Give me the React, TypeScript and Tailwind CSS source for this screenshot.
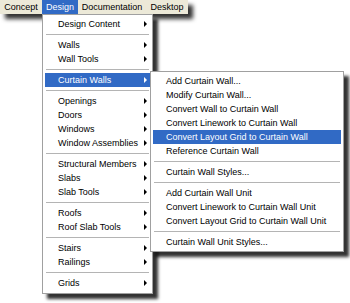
import React from "react";

type Item = { t: string; hl?: boolean } | "sep";

const mainItems: Item[] = [
  { t: "Design Content" },
  "sep",
  { t: "Walls" },
  { t: "Wall Tools" },
  "sep",
  { t: "Curtain Walls", hl: true },
  "sep",
  { t: "Openings" },
  { t: "Doors" },
  { t: "Windows" },
  { t: "Window Assemblies" },
  "sep",
  { t: "Structural Members" },
  { t: "Slabs" },
  { t: "Slab Tools" },
  "sep",
  { t: "Roofs" },
  { t: "Roof Slab Tools" },
  "sep",
  { t: "Stairs" },
  { t: "Railings" },
  "sep",
  { t: "Grids" },
];

const subItems: Item[] = [
  { t: "Add Curtain Wall..." },
  { t: "Modify Curtain Wall..." },
  { t: "Convert Wall to Curtain Wall" },
  { t: "Convert Linework to Curtain Wall" },
  { t: "Convert Layout Grid to Curtain Wall", hl: true },
  { t: "Reference Curtain Wall" },
  "sep",
  { t: "Curtain Wall Styles..." },
  "sep",
  { t: "Add Curtain Wall Unit" },
  { t: "Convert Linework to Curtain Wall Unit" },
  { t: "Convert Layout Grid to Curtain Wall Unit" },
  "sep",
  { t: "Curtain Wall Unit Styles..." },
];

function Arrow({ white }: { white?: boolean }) {
  return (
    <span
      className={
        white
          ? "w-0 h-0 border-y-[3px] border-y-transparent border-l-[3px] border-l-white"
          : "w-0 h-0 border-y-[3px] border-y-transparent border-l-[3px] border-l-black"
      }
    />
  );
}

function Rows({ items, arrows }: { items: Item[]; arrows: boolean }) {
  return (
    <>
      {items.map((it, i) =>
        it === "sep" ? (
          <div key={i} className="h-[7px] flex items-center px-[1px]">
            <div className="h-px w-full bg-[#b4b4b4]" />
          </div>
        ) : (
          <div
            key={i}
            className={
              it.hl
                ? "h-[14px] leading-[14px] flex items-center justify-between pl-[13px] pr-[3px] bg-[#316ac5] text-white whitespace-nowrap"
                : "h-[14px] leading-[14px] flex items-center justify-between pl-[13px] pr-[3px] text-black whitespace-nowrap"
            }
          >
            <span>{it.t}</span>
            {arrows && <Arrow white={it.hl} />}
          </div>
        )
      )}
    </>
  );
}

export default function App() {
  return (
    <div
      className="relative w-[350px] h-[303px] bg-white overflow-hidden text-[9px]"
      style={{ fontFamily: '"Liberation Sans", Arial, sans-serif' }}
    >
      <div className="flex h-[14px] w-[188px] bg-[#ece9d8] shadow-[5px_5px_4px_rgba(0,0,0,0.8)] leading-[14px] text-black">
        <div className="w-[42px] text-center">Concept</div>
        <div className="w-[36px] text-center bg-[#316ac5] text-white">Design</div>
        <div className="w-[68px] text-center">Documentation</div>
        <div className="w-[42px] text-center">Desktop</div>
      </div>

      <div className="absolute left-[42px] top-[14px] w-[111px] h-[280px] bg-white border border-[#a0a0a0] p-[2px] shadow-[5px_5px_3px_rgba(0,0,0,0.8)]">
        <Rows items={mainItems} arrows />
      </div>

      <div className="absolute left-[150px] top-[71px] w-[194px] h-[181px] bg-white border border-[#a0a0a0] p-[2px] shadow-[5px_5px_3px_rgba(0,0,0,0.8)]">
        <Rows items={subItems} arrows={false} />
      </div>
    </div>
  );
}
